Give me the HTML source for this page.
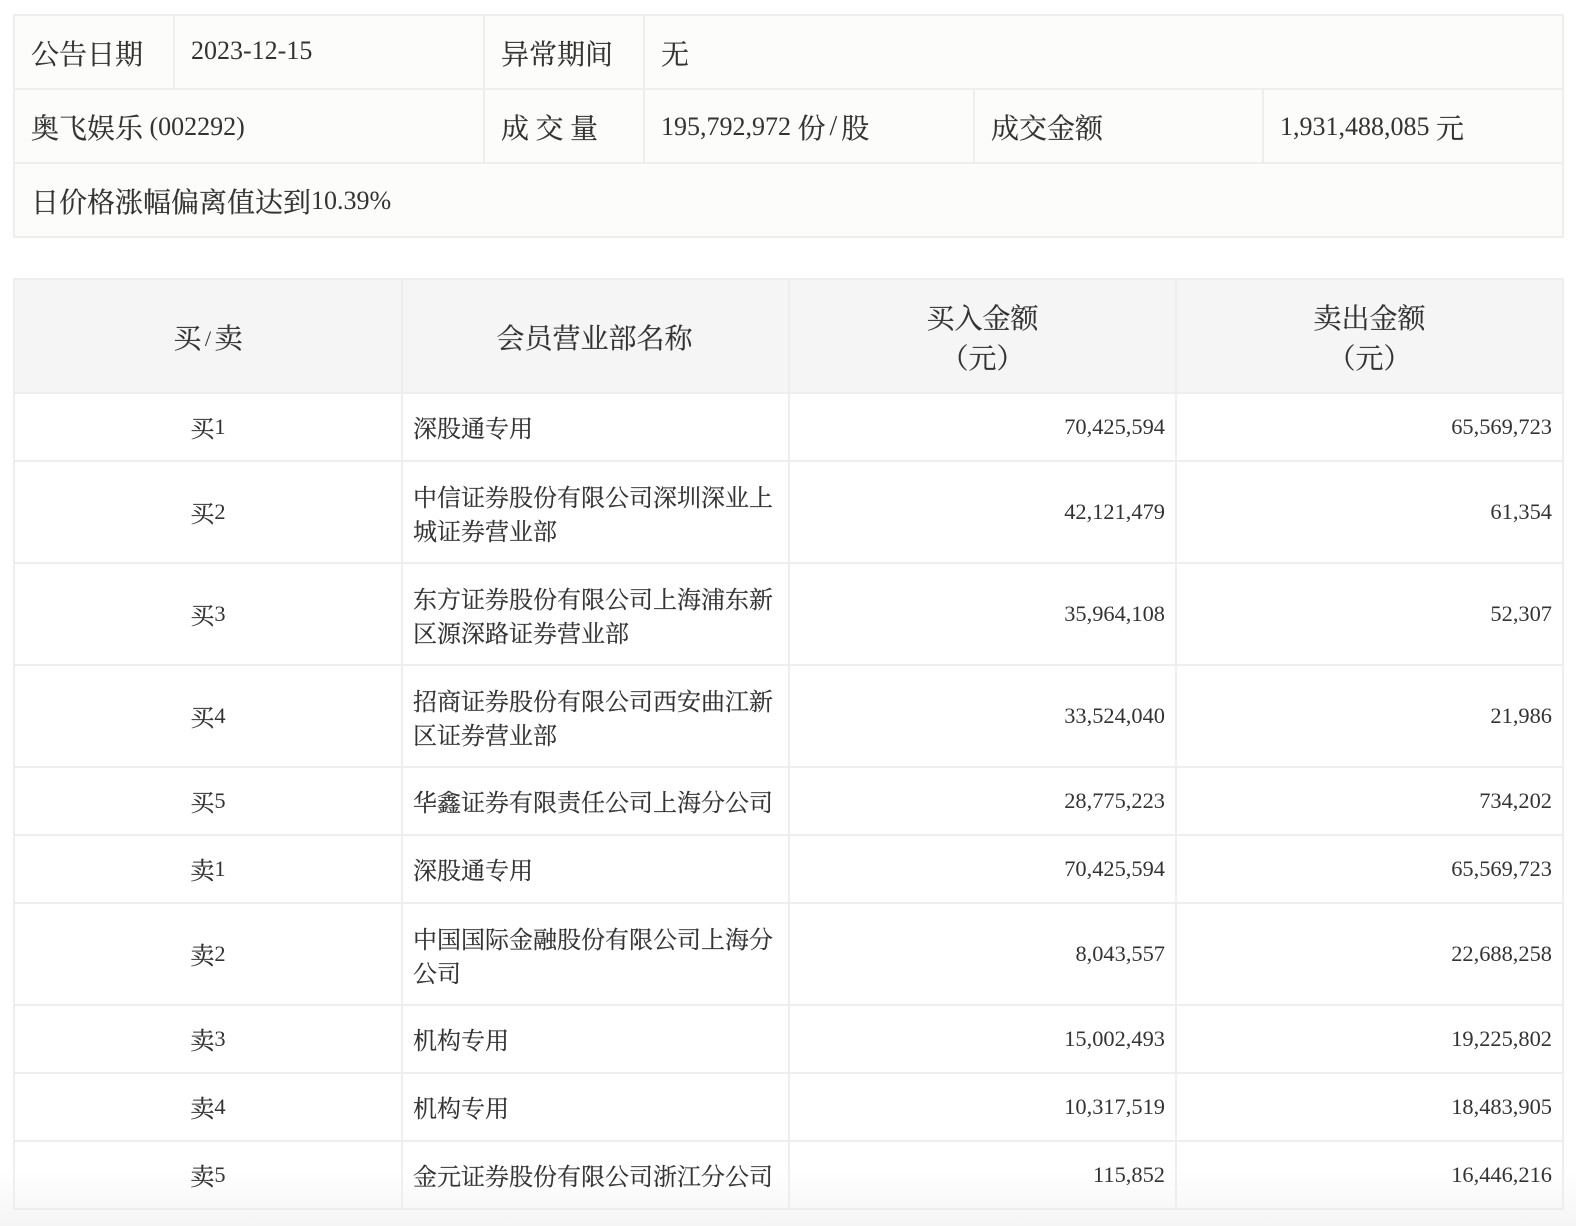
<!DOCTYPE html>
<html lang="zh"><head><meta charset="utf-8"><title>龙虎榜</title>
<style>
html,body{margin:0;padding:0}
body{position:relative;width:1576px;height:1226px;overflow:hidden;background:#fff;color:#333;font-family:"Liberation Serif","Noto Serif CJK SC",serif;-webkit-text-stroke:.2px #333}
i{-webkit-text-stroke:0;position:relative;top:-3px}
#fade{position:absolute;left:0;top:1170px;width:1576px;height:56px;background:linear-gradient(#fff,#f5f5f5)}
.bg{position:absolute}
.h{position:absolute;height:2px;background:#eee}
.v{position:absolute;width:2px;background:#eee}
.c{position:absolute;display:flex;align-items:center;white-space:nowrap;box-sizing:border-box;padding-top:6px}
.t1{font-size:28px;line-height:39px}
.t1 i{font-style:normal;font-size:26px}
.t1 i.sl{font-size:28px;margin:0 4px}
.sl{font-size:28px;margin:0 3px}
.r{position:absolute;left:0;width:1576px}
.r>div{position:absolute;top:0;height:100%;display:flex;align-items:center;box-sizing:border-box;font-size:24px;line-height:34px;padding-top:6px}
.r i{font-style:normal;font-size:22.4px}
.a{left:15px;width:386px;justify-content:center}
.b{left:403px;width:385px;padding-left:10px;padding-right:7px}
.b span{position:relative;top:1px}
.d{left:790px;width:385px;justify-content:flex-end;padding-right:10px}
.e{left:1177px;width:385px;justify-content:flex-end;padding-right:10px}
.r.th>div{font-size:28px;line-height:40px;text-align:center;justify-content:center;padding:8px 0 0}
.r.th .b{left:402px}
</style></head><body>
<div id="fade"></div>
<div class="bg" style="left:13px;top:14px;width:1551px;height:224px;background:#fcfcfa"></div>
<div class="bg" style="left:13px;top:278px;width:1551px;height:116px;background:#f5f5f5"></div>

<div class="h" style="left:13px;top:14px;width:1551px"></div>
<div class="h" style="left:13px;top:88px;width:1551px"></div>
<div class="h" style="left:13px;top:162px;width:1551px"></div>
<div class="h" style="left:13px;top:236px;width:1551px"></div>
<div class="v" style="left:13px;top:14px;height:224px"></div>
<div class="v" style="left:1562px;top:14px;height:224px"></div>
<div class="v" style="left:173px;top:14px;height:74px"></div>
<div class="v" style="left:483px;top:14px;height:148px"></div>
<div class="v" style="left:643px;top:14px;height:148px"></div>
<div class="v" style="left:973px;top:88px;height:74px"></div>
<div class="v" style="left:1262px;top:88px;height:74px"></div>

<div class="c t1" style="left:31px;top:16px;height:72px">公告日期</div>
<div class="c t1" style="left:191px;top:14px;height:72px"><i>2023-12-15</i></div>
<div class="c t1" style="left:501px;top:16px;height:72px">异常期间</div>
<div class="c t1" style="left:661px;top:16px;height:72px">无</div>
<div class="c t1" style="left:31px;top:90px;height:72px;white-space:pre">奥飞娱乐<i> (002292)</i></div>
<div class="c t1" style="left:501px;top:90px;height:72px;white-space:pre">成<i> </i>交<i> </i>量</div>
<div class="c t1" style="left:661px;top:90px;height:72px;white-space:pre"><i>195,792,972 </i>份<i class="sl">/</i>股</div>
<div class="c t1" style="left:991px;top:90px;height:72px">成交金额</div>
<div class="c t1" style="left:1280px;top:90px;height:72px;white-space:pre"><i>1,931,488,085 </i>元</div>
<div class="c t1" style="left:31px;top:164px;height:72px">日价格涨幅偏离值达到<i>10.39%</i></div>

<div class="h" style="left:13px;top:278px;width:1551px"></div>
<div class="h" style="left:13px;top:392px;width:1551px"></div>
<div class="h" style="left:13px;top:460px;width:1551px"></div>
<div class="h" style="left:13px;top:562px;width:1551px"></div>
<div class="h" style="left:13px;top:664px;width:1551px"></div>
<div class="h" style="left:13px;top:766px;width:1551px"></div>
<div class="h" style="left:13px;top:834px;width:1551px"></div>
<div class="h" style="left:13px;top:902px;width:1551px"></div>
<div class="h" style="left:13px;top:1004px;width:1551px"></div>
<div class="h" style="left:13px;top:1072px;width:1551px"></div>
<div class="h" style="left:13px;top:1140px;width:1551px"></div>
<div class="h" style="left:13px;top:1208px;width:1551px"></div>
<div class="v" style="left:13px;top:278px;height:932px"></div>
<div class="v" style="left:401px;top:278px;height:932px"></div>
<div class="v" style="left:788px;top:278px;height:932px"></div>
<div class="v" style="left:1175px;top:278px;height:932px"></div>
<div class="v" style="left:1562px;top:278px;height:932px"></div>

<div class="r th" style="top:280px;height:112px">
<div class="a">买<i class="sl" style="top:-1px;font-style:normal;margin:0 3.5px">/</i>卖</div><div class="b">会员营业部名称</div><div class="d">买入金额<br>（元）</div><div class="e">卖出金额<br>（元）</div></div>

<div class="r" style="top:394px;height:66px"><div class="a">买<i>1</i></div><div class="b">深股通专用</div><div class="d"><i>70,425,594</i></div><div class="e"><i>65,569,723</i></div></div>
<div class="r" style="top:462px;height:100px"><div class="a">买<i>2</i></div><div class="b"><span>中信证券股份有限公司深圳深业上<br>城证券营业部</span></div><div class="d"><i>42,121,479</i></div><div class="e"><i>61,354</i></div></div>
<div class="r" style="top:564px;height:100px"><div class="a">买<i>3</i></div><div class="b"><span>东方证券股份有限公司上海浦东新<br>区源深路证券营业部</span></div><div class="d"><i>35,964,108</i></div><div class="e"><i>52,307</i></div></div>
<div class="r" style="top:666px;height:100px"><div class="a">买<i>4</i></div><div class="b"><span>招商证券股份有限公司西安曲江新<br>区证券营业部</span></div><div class="d"><i>33,524,040</i></div><div class="e"><i>21,986</i></div></div>
<div class="r" style="top:768px;height:66px"><div class="a">买<i>5</i></div><div class="b">华鑫证券有限责任公司上海分公司</div><div class="d"><i>28,775,223</i></div><div class="e"><i>734,202</i></div></div>
<div class="r" style="top:836px;height:66px"><div class="a">卖<i>1</i></div><div class="b">深股通专用</div><div class="d"><i>70,425,594</i></div><div class="e"><i>65,569,723</i></div></div>
<div class="r" style="top:904px;height:100px"><div class="a">卖<i>2</i></div><div class="b"><span>中国国际金融股份有限公司上海分<br>公司</span></div><div class="d"><i>8,043,557</i></div><div class="e"><i>22,688,258</i></div></div>
<div class="r" style="top:1006px;height:66px"><div class="a">卖<i>3</i></div><div class="b">机构专用</div><div class="d"><i>15,002,493</i></div><div class="e"><i>19,225,802</i></div></div>
<div class="r" style="top:1074px;height:66px"><div class="a">卖<i>4</i></div><div class="b">机构专用</div><div class="d"><i>10,317,519</i></div><div class="e"><i>18,483,905</i></div></div>
<div class="r" style="top:1142px;height:66px"><div class="a">卖<i>5</i></div><div class="b">金元证券股份有限公司浙江分公司</div><div class="d"><i>115,852</i></div><div class="e"><i>16,446,216</i></div></div>
</body></html>
